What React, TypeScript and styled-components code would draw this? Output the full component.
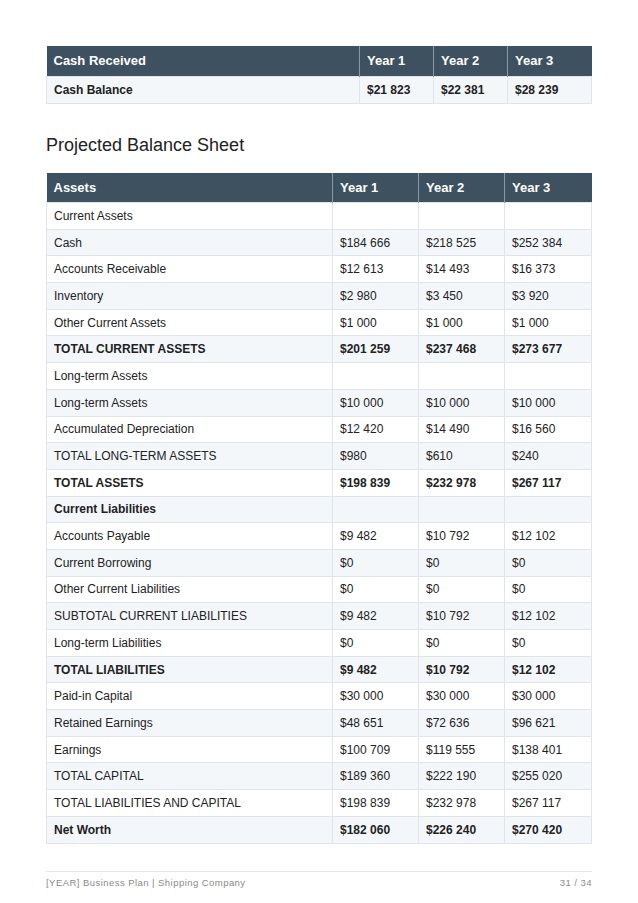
import React from "react";
import styled, { createGlobalStyle } from "styled-components";

const Global = createGlobalStyle`
  html, body { margin: 0; padding: 0; background: #ffffff; }
  body { font-family: "Liberation Sans", Arial, Helvetica, sans-serif; color: #222; }
`;

const Page = styled.div`
  width: 638px;
  height: 903px;
  box-sizing: border-box;
  padding: 46px 46px 0 46px;
  display: flex;
  flex-direction: column;
`;

const Table = styled.table`
  width: 546px;
  border-collapse: collapse;
  table-layout: fixed;
  font-size: 12px;
`;

const HeadCell = styled.th<{ $w?: number }>`
  background: #3d5161;
  color: #ffffff;
  font-weight: 700;
  font-size: 13px;
  text-align: left;
  padding: 0 7px;
  height: 30px;
  box-sizing: border-box;
  border-left: 1px solid #8a99a6;
  width: ${(p) => (p.$w ? `${p.$w}px` : "auto")};
  &:first-child { border-left: none; }
`;

const Row = styled.tr<{ $shade: boolean }>`
  background: ${(p) => (p.$shade ? "#f4f7fa" : "#ffffff")};
`;

const Cell = styled.td<{ $bold?: boolean; $h: number }>`
  height: ${(p) => p.$h}px;
  padding: 0 7px;
  box-sizing: border-box;
  border: 1px solid #dfe5ea;
  font-weight: ${(p) => (p.$bold ? 700 : 400)};
  color: #222;
  white-space: nowrap;
`;

const Title = styled.h2`
  margin: 29px 0 16px 0;
  font-size: 18px;
  font-weight: 400;
  color: #222;
  line-height: 24px;
`;

const Spacer = styled.div`
  flex: 1;
`;

const Footer = styled.div`
  border-top: 1px solid #e3e6e9;
  display: flex;
  justify-content: space-between;
  padding-top: 5px;
  margin-bottom: 15px;
  font-size: 9.5px;
  letter-spacing: 0.45px;
  color: #8a8a8a;
`;

type R = { label: string; v: [string, string, string]; bold?: boolean };

const rows: R[] = [
  { label: "Current Assets", v: ["", "", ""] },
  { label: "Cash", v: ["$184 666", "$218 525", "$252 384"] },
  { label: "Accounts Receivable", v: ["$12 613", "$14 493", "$16 373"] },
  { label: "Inventory", v: ["$2 980", "$3 450", "$3 920"] },
  { label: "Other Current Assets", v: ["$1 000", "$1 000", "$1 000"] },
  { label: "TOTAL CURRENT ASSETS", v: ["$201 259", "$237 468", "$273 677"], bold: true },
  { label: "Long-term Assets", v: ["", "", ""] },
  { label: "Long-term Assets", v: ["$10 000", "$10 000", "$10 000"] },
  { label: "Accumulated Depreciation", v: ["$12 420", "$14 490", "$16 560"] },
  { label: "TOTAL LONG-TERM ASSETS", v: ["$980", "$610", "$240"] },
  { label: "TOTAL ASSETS", v: ["$198 839", "$232 978", "$267 117"], bold: true },
  { label: "Current Liabilities", v: ["", "", ""], bold: true },
  { label: "Accounts Payable", v: ["$9 482", "$10 792", "$12 102"] },
  { label: "Current Borrowing", v: ["$0", "$0", "$0"] },
  { label: "Other Current Liabilities", v: ["$0", "$0", "$0"] },
  { label: "SUBTOTAL CURRENT LIABILITIES", v: ["$9 482", "$10 792", "$12 102"] },
  { label: "Long-term Liabilities", v: ["$0", "$0", "$0"] },
  { label: "TOTAL LIABILITIES", v: ["$9 482", "$10 792", "$12 102"], bold: true },
  { label: "Paid-in Capital", v: ["$30 000", "$30 000", "$30 000"] },
  { label: "Retained Earnings", v: ["$48 651", "$72 636", "$96 621"] },
  { label: "Earnings", v: ["$100 709", "$119 555", "$138 401"] },
  { label: "TOTAL CAPITAL", v: ["$189 360", "$222 190", "$255 020"] },
  { label: "TOTAL LIABILITIES AND CAPITAL", v: ["$198 839", "$232 978", "$267 117"] },
  { label: "Net Worth", v: ["$182 060", "$226 240", "$270 420"], bold: true },
];

export default function App() {
  return (
    <>
      <Global />
      <Page>
        <Table>
          <thead>
            <tr>
              <HeadCell>Cash Received</HeadCell>
              <HeadCell $w={74}>Year 1</HeadCell>
              <HeadCell $w={74}>Year 2</HeadCell>
              <HeadCell $w={84}>Year 3</HeadCell>
            </tr>
          </thead>
          <tbody>
            <Row $shade={true}>
              <Cell $bold $h={27}>Cash Balance</Cell>
              <Cell $bold $h={27}>$21 823</Cell>
              <Cell $bold $h={27}>$22 381</Cell>
              <Cell $bold $h={27}>$28 239</Cell>
            </Row>
          </tbody>
        </Table>

        <Title>Projected Balance Sheet</Title>

        <Table>
          <thead>
            <tr>
              <HeadCell>Assets</HeadCell>
              <HeadCell $w={86}>Year 1</HeadCell>
              <HeadCell $w={86}>Year 2</HeadCell>
              <HeadCell $w={87}>Year 3</HeadCell>
            </tr>
          </thead>
          <tbody>
            {rows.map((r, i) => (
              <Row key={i} $shade={i % 2 === 1}>
                <Cell $bold={r.bold} $h={26.7}>{r.label}</Cell>
                {r.v.map((v, j) => (
                  <Cell key={j} $bold={r.bold} $h={26.7}>{v}</Cell>
                ))}
              </Row>
            ))}
          </tbody>
        </Table>

        <Spacer />
        <Footer>
          <span>[YEAR] Business Plan | Shipping Company</span>
          <span>31 / 34</span>
        </Footer>
      </Page>
    </>
  );
}
